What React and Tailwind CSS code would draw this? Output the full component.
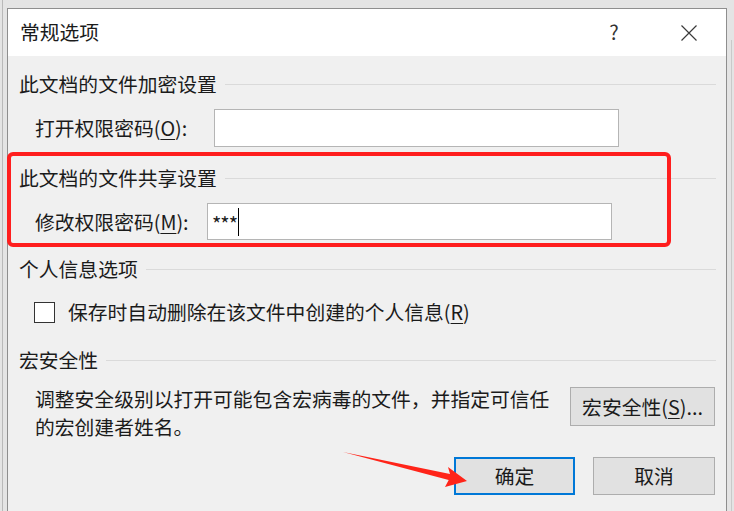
import React from 'react';

const font = { fontFamily: '"Noto Sans CJK SC", "Microsoft YaHei", "Noto Sans", sans-serif' };

function SectionHeader({ title, className = '' }) {
  return (
    <div className={`flex h-[28px] items-center pr-[10px] ${className}`}>
      <span className="whitespace-nowrap">{title}</span>
      <div className="ml-[8px] h-px flex-1 bg-[#dadada]" />
    </div>
  );
}

function Accel({ children }) {
  return <span className="underline decoration-1 underline-offset-[3px]">{children}</span>;
}

export default function App() {
  return (
    <div
      className="relative h-[511px] w-[734px] overflow-hidden bg-[#e4e4e4] pl-[7px] pt-[8px] text-[19.8px] leading-[28px] text-[#1b1b1b]"
      style={font}
    >
      {/* window edge behind the dialog */}
      <div className="pointer-events-none absolute left-[2px] top-0 h-full w-px bg-[#b9b9b9]" />
      <div className="pointer-events-none absolute right-[2px] top-[40px] h-full w-px bg-[#c9c9c9]" />

      <div className="flex h-[520px] w-[720px] flex-col border border-[#8e8e8e] bg-[#f0f0f0]">
        {/* title bar */}
        <div className="flex h-[47px] shrink-0 items-center bg-white pl-[12px]">
          <span className="flex-1 pb-[2px]">常规选项</span>
          <span className="w-[20px] pb-[2px] text-center text-[20px] text-[#333]">?</span>
          <div className="ml-[57px] mr-[29px] flex h-[16px] w-[16px] items-center justify-center">
            <svg width="16" height="16" viewBox="0 0 16 16" fill="none" stroke="#3a3a3a" strokeWidth="1.2">
              <path d="M0.5 0.5 L15.5 15.5 M15.5 0.5 L0.5 15.5" />
            </svg>
          </div>
        </div>

        {/* body */}
        <div className="flex flex-col pl-[11px] pt-[14px]">
          <SectionHeader title="此文档的文件加密设置" />
          <div className="mt-[11px] flex h-[38px] items-center pl-[16px]">
            <span className="w-[179px] whitespace-nowrap">
              打开权限密码(<Accel>O</Accel>):
            </span>
            <div className="h-[38px] w-[405px] border border-[#b5b5b5] bg-white" />
          </div>

          <SectionHeader title="此文档的文件共享设置" className="mt-[17px]" />
          <div className="mt-[11px] flex h-[37px] items-center pl-[16px]">
            <span className="w-[172px] whitespace-nowrap">
              修改权限密码(<Accel>M</Accel>):
            </span>
            <div className="flex h-[37px] w-[405px] items-center border border-[#b5b5b5] bg-white pl-[4px]">
              <span className="pt-[5px] text-[20px] tracking-[-1px]">***</span>
              <span className="ml-[1px] h-[28px] w-px bg-black" />
            </div>
          </div>

          <SectionHeader title="个人信息选项" className="mt-[15px]" />
          <div className="mt-[15px] flex h-[28px] items-center pl-[15px]">
            <div className="h-[21px] w-[21px] border border-[#333] bg-white" />
            <span className="ml-[13px] whitespace-nowrap">
              保存时自动删除在该文件中创建的个人信息(<Accel>R</Accel>)
            </span>
          </div>

          <SectionHeader title="宏安全性" className="mt-[20px]" />
          <div className="mt-[11px] flex items-start pr-[11px]">
            <p className="w-[540px] pl-[16px]">
              调整安全级别以打开可能包含宏病毒的文件，并指定可信任的宏创建者姓名。
            </p>
            <div className="ml-auto mt-[2px] flex h-[39px] w-[145px] items-center justify-center border border-[#adadad] bg-[#e1e1e1]">
              宏安全性(<Accel>S</Accel>)...
            </div>
          </div>

          <div className="mt-[16px] flex justify-end gap-[18px] pr-[11px]">
            <div className="flex h-[38px] w-[121px] items-center justify-center border-2 border-[#0078d7] bg-[#e1e1e1]">
              确定
            </div>
            <div className="flex h-[38px] w-[122px] items-center justify-center border border-[#adadad] bg-[#e1e1e1]">
              取消
            </div>
          </div>
        </div>
      </div>

      {/* red annotation box */}
      <div className="pointer-events-none absolute left-[7px] top-[152px] h-[95px] w-[664px] rounded-[6px] border-4 border-[#ff1e1e]" />

      {/* red annotation arrow */}
      <svg className="pointer-events-none absolute left-0 top-0" width="734" height="511" viewBox="0 0 734 511">
        <polygon
          points="343,452 450,474 448,467 467,481 445,487 448.7,480"
          fill="#ff2419"
        />
      </svg>
    </div>
  );
}
